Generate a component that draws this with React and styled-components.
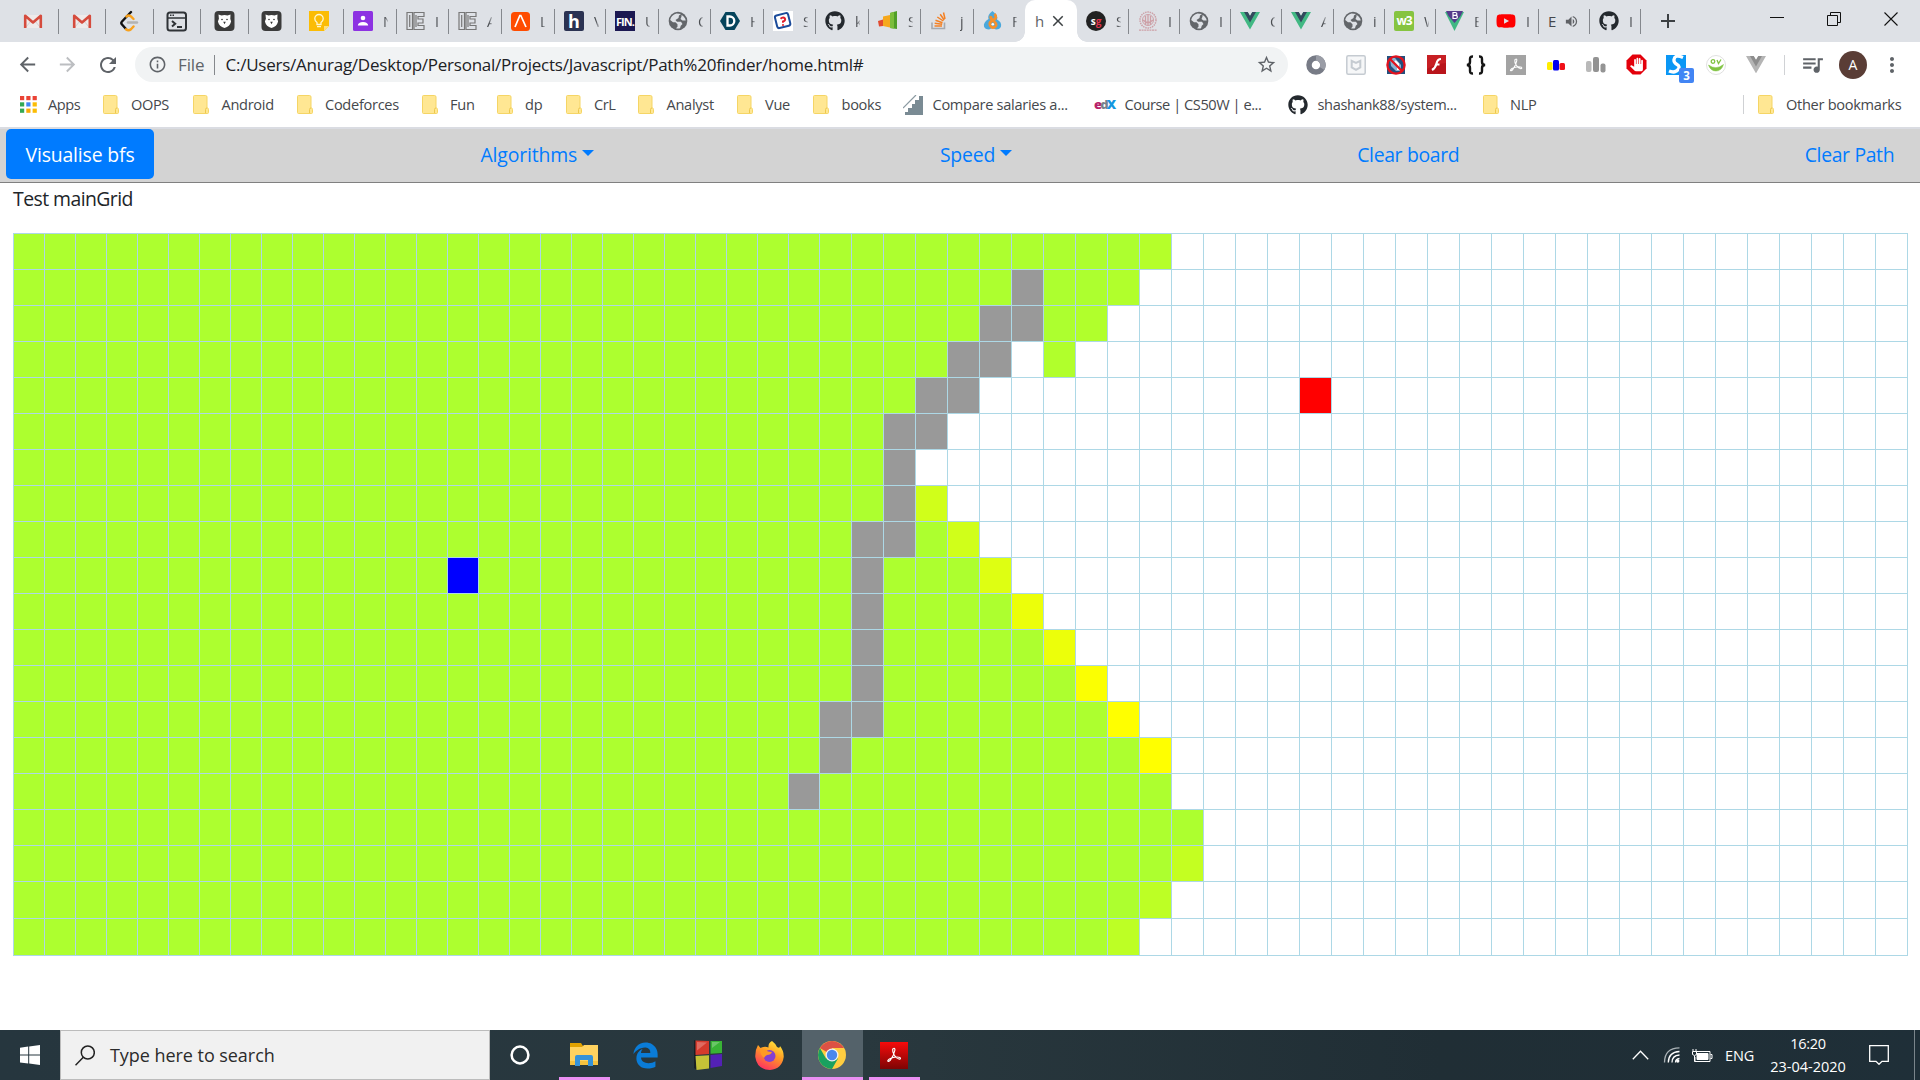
import React from "react";
import styled, { createGlobalStyle } from "styled-components";
import { FaGithub, FaYoutube } from "react-icons/fa";
import { FaEdgeLegacy } from "react-icons/fa6";
import {
  MdPublic, MdArrowBack, MdArrowForward, MdRefresh, MdInfoOutline, MdStarBorder,
  MdQueueMusic, MdVolumeUp, MdClose, MdAdd, MdMoreVert, MdPanTool,
} from "react-icons/md";

const Global = createGlobalStyle`
  *, *::before, *::after { box-sizing: border-box; }
  body {
    margin: 0;
    background: #fff;
    font-family: "Open Sans", "Noto Sans", sans-serif;
    overflow: hidden;
  }
  svg { display: block; flex: none; }
`;

const Screen = styled.div`
  display: flex;
  flex-direction: column;
  width: 1920px;
  height: 1080px;
  overflow: hidden;
`;

const Label = styled.span`
  white-space: pre;
  letter-spacing: ${(p) => p.$ls || 0}px;
`;

/* ---------- tab strip ---------- */

const TabStrip = styled.div`
  display: flex;
  height: 42px;
  background: #dee1e6;
`;

const Tab = styled.div`
  display: flex;
  align-items: center;
  flex: none;
  width: ${(p) => p.$w}px;
  padding-left: ${(p) => (p.$wide ? 9 : 0)}px;
  padding-right: ${(p) => (p.$wide ? 0 : 2)}px;
  justify-content: ${(p) => (p.$wide ? "flex-start" : "center")};
  background: linear-gradient(#85888d, #85888d) right 9px / 1px 25px no-repeat;
  ${(p) => p.$plain && "background: none;"}
`;

const TabTitle = styled.span`
  width: 5px;
  margin-left: 10px;
  white-space: nowrap;
  font-size: 14.5px;
  color: #4a4d51;
  mask-image: linear-gradient(90deg, #000 40%, rgba(0, 0, 0, 0.2));
`;

const ActiveTab = styled.div`
  position: relative;
  display: flex;
  align-items: center;
  gap: 5px;
  width: 52px;
  padding-left: 10px;
  background: #fff;
  border-radius: 10px 10px 0 0;
  font-size: 15px;
  color: #606266;
  &::before, &::after {
    content: "";
    position: absolute;
    bottom: 0;
    width: 10px;
    height: 10px;
  }
  &::before { left: -10px; background: radial-gradient(circle at 0 0, transparent 9.5px, #fff 10px); }
  &::after { right: -10px; background: radial-gradient(circle at 100% 0, transparent 9.5px, #fff 10px); }
`;

const NewTab = styled.div`
  display: flex;
  align-items: center;
  padding-left: 15px;
  color: #3c4043;
`;

const WindowControls = styled.div`
  display: flex;
  gap: 43px;
  margin: 12px 22px 0 auto;
`;

const Tile = styled.span`
  display: flex;
  align-items: center;
  justify-content: center;
  flex: none;
  width: 20px;
  height: 20px;
  border-radius: ${(p) => p.$r ?? 2}px;
  background: ${(p) => p.$bg};
  color: ${(p) => p.$c || "#fff"};
  font-size: ${(p) => p.$fs || 14}px;
  font-weight: 700;
  line-height: 1;
  letter-spacing: ${(p) => p.$ls || 0}px;
`;

const RedLetter = styled.span`
  color: #e0334c;
`;

const Gmail = () => (
  <svg width="20" height="20" viewBox="0 0 20 20">
    <rect x="2" y="4" width="16" height="13" fill="#eeeaea" />
    <path d="M2 4l8 7 8-7M3 16l5-6M17 16l-5-6" stroke="#d5d0d0" fill="none" />
    <path d="M2.200 17V4.800L10 11.500l7.800-6.700V17" fill="none" stroke="#d54b3d" strokeWidth="2.600" strokeLinejoin="round" />
  </svg>
);
const Leet = () => (
  <svg width="20" height="22" viewBox="0 0 20 22" fill="none" strokeLinecap="round" strokeWidth="2.400">
    <path d="M12 2L3 11.500q-1.400 1.500 0 3l4 4.500" stroke="#111" />
    <path d="M7 19.200q2.500 2 5 0l2.500-2.700M14.500 9L12 6.500q-2.300-1.800-4.500 0" stroke="#f9a11b" />
    <path d="M9 12.500h9" stroke="#b3b3b3" />
  </svg>
);
const Terminal = () => (
  <svg width="22" height="21" viewBox="0 0 22 21" fill="none" stroke="#2f3337" strokeWidth="2">
    <rect x="1.500" y="1.500" width="18.500" height="18" rx="2.500" />
    <path d="M1.500 7h19" strokeWidth="1.500" />
    <path d="M4 4.300h5" strokeWidth="1.500" strokeDasharray="1.500 1" />
    <path d="M6 10l3.200 2.700L6 15.500M11 16h5" />
  </svg>
);
const Bear = () => (
  <svg width="21" height="20" viewBox="0 0 21 20">
    <rect x=".5" width="20" height="20" rx="4" fill="#3b3b3b" />
    <path d="M4.500 3.500l3 1q3-1 6 0l3-1-.2 4.300.8 2.700q-1.200 5-6.600 6.500-5.400-1.500-6.600-6.500L4.900 7.800z" fill="#fff" />
    <circle cx="8" cy="8.500" r=".8" fill="#333" /><circle cx="13" cy="8.500" r=".8" fill="#333" />
    <path d="M9.200 10.800h2.600l-1.300 2.400z" fill="#333" />
  </svg>
);
const Keep = () => (
  <svg width="20" height="20" viewBox="0 0 20 20">
    <path d="M0 0h20v15l-5 5H0z" fill="#fbbc05" /><path d="M15 20v-5h5z" fill="#ffdf7a" />
    <path d="M8 13.500v-2Q5.800 10 5.800 7.700a4.200 4.200 0 018.400 0q0 2.300-2.200 3.800v2zM8 15.700h4" fill="none" stroke="#fff6d0" strokeWidth="1.300" />
  </svg>
);
const Classroom = () => (
  <svg width="20" height="20" viewBox="0 0 20 20">
    <rect width="20" height="20" rx="1.500" fill="#8d32e2" />
    <circle cx="10" cy="7" r="2.300" fill="#fff" /><path d="M4.800 14.500q.4-3.500 5.200-3.500t5.200 3.500z" fill="#fff" />
  </svg>
);
const IEIcon = () => (
  <svg width="19" height="20" viewBox="0 0 19 20" fill="none" stroke="#777" strokeWidth="1.200">
    <path d="M1 1.500h5.500v17H1zM3.700 4v12M8 1.500h10v4h-6v2.500h5v4h-5v2.500h6v4H8zM10 4v12" />
  </svg>
);
const Lambda = () => (
  <svg width="19" height="19" viewBox="0 0 19 19">
    <rect width="19" height="19" rx="3.500" fill="#ff4c00" />
    <path d="M4 15L8.800 3.500h1L15 15" fill="none" stroke="#fff" strokeWidth="1.700" />
  </svg>
);
const Globe = () => (
  <svg width="20" height="20" viewBox="0 0 20 20">
    <circle cx="10" cy="10" r="9.300" fill="#63666a" />
    <path d="M8.500 2.500Q3 4 2.200 9l2.800 2.300h2.500l2 2v2.500l-1.500 1.500q2 .6 4 0 .3-2.800 2.500-4.300l-1.500-2.300H9L7.500 9l3-2 .5-2.500 2-1.500zM13.500 5.500l-1 2.500 2 1.500h3.200q-.5-3.500-4.200-5.500z" fill="#dee1e6" />
  </svg>
);
const Disqus = () => (
  <svg width="20" height="20" viewBox="0 0 20 20">
    <path d="M5.500 1h9L20 10l-5.500 9h-9L0 10z" fill="#05445c" />
    <path d="M7.500 5.500h2.300a4.500 4.500 0 010 9H7.500z" fill="none" stroke="#fff" strokeWidth="2.300" />
  </svg>
);
const Quiz = () => (
  <Tile $bg="#fff" $r={0}>
    <svg width="20" height="20" viewBox="0 0 20 20">
      <rect x="3" y="3" width="13.500" height="13" rx="2" transform="rotate(-14 10 10)" fill="#fff" stroke="#1b4b9b" strokeWidth="2" />
      <path d="M7.500 7.800q2.600-2.300 4.400-.3 1 2-1.900 3v1.200M10 13.300v1.500" fill="none" stroke="#df1f2d" strokeWidth="2" />
    </svg>
  </Tile>
);
const Git = () => <FaGithub size={20} color="#24292e" />;
const Bars = () => (
  <svg width="20" height="20" viewBox="0 0 20 20">
    <path d="M0 10l5-1.500v6.500l-4 .5z" fill="#e24a2f" /><path d="M5 5.500L12 4v12.500L5 15z" fill="#f6a81c" />
    <path d="M12 2l7-2v18l-7-1z" fill="#4f9e27" /><path d="M12 2l4-1v16.500l-4-.5z" fill="#7bbd3a" />
  </svg>
);
const Stack = () => (
  <svg width="20" height="18" viewBox="-3 0 20 18" fill="none">
    <path d="M-1 10.500V16.500h12.500v-6" stroke="#a6a9ae" strokeWidth="1.600" />
    <path d="M1.500 14h7.500M1.700 11.300l7.500.9M2.500 8.200l7 2.500M4.300 5l6 4M7.200 2.200l4 5.800M10.500.5l1.500 6.500" stroke="#f48024" strokeWidth="1.500" />
  </svg>
);
const Flame = () => (
  <svg width="19" height="20" viewBox="0 0 19 20">
    <path d="M9.500 0q6 5 4.500 8.500Q19 11 18 15.500 17 18.500 13 18.500L9.500 17 6 18.500Q2 18.500 1 15.500q-1-4 4.500-7.500Q4 4 9.500 0z" fill="#4ba8db" />
    <path d="M11.500 3q3.500 3.500-1.500 6.200Q6 11 7 14q1.500 3.500 5 2 3-2.500-1.500-6Q7 8 8 5" fill="none" stroke="#f5902c" strokeWidth="2.800" />
    <circle cx="9.800" cy="13.300" r="1.300" fill="#fff" />
  </svg>
);
const Seal = () => (
  <svg width="20" height="20" viewBox="0 0 20 20" fill="none" stroke="#cda0a7">
    <circle cx="10" cy="9" r="8" strokeWidth="1.500" strokeDasharray="1.500 .8" />
    <circle cx="10" cy="9" r="5.500" /><path d="M7.500 5v9M10 4v10M12.500 5v9M5 9q5 5 10 0" strokeWidth="1.300" />
    <path d="M1 19.200h18" strokeWidth="1.300" strokeDasharray="2 .6" />
  </svg>
);
const Vue = ({ a = "#41b883", b = "#34495e", w = 20 }) => (
  <svg width={w} height={w * 0.87} viewBox="0 0 20 17.400">
    <path d="M0 0h7.700L10 4l2.300-4H20L10 17.400z" fill={a} /><path d="M4 0h3.700L10 4l2.300-4H16l-6 10.400z" fill={b} />
  </svg>
);
const BootVue = () => (
  <svg width="19" height="20" viewBox="0 0 19 20">
    <path d="M0 1h4l5.500 10L15 1h4L9.500 20z" fill="#41b883" /><path d="M1 0h17l-2.500 5-6 7-6-7z" fill="#553c8b" />
    <path d="M8 1.500h2.300q1.600.1 1.600 1.400t-1.600 1.400H8zM8 4.300h2.700q1.700.1 1.700 1.600t-1.700 1.600H8z" fill="none" stroke="#fff" strokeWidth="1.200" />
  </svg>
);
const Youtube = () => <FaYoutube size={20} color="#f00" />;

const tabs = [
  [59, Gmail], [47, Gmail], [48, Leet], [47, Terminal], [48, Bear], [47, Bear], [48, Keep],
  [53, Classroom, "N"], [52, IEIcon, "I"], [53, IEIcon, "A"], [53, Lambda, "L"],
  [51, () => <Tile $bg="#2b3252" $fs={18}>h</Tile>, "V"],
  [53, () => <Tile $bg="#1c1852" $fs={11} $r={0} $ls={-0.9}>FIN.</Tile>, "U"],
  [52, Globe, "C"], [53, Disqus, "H"], [52, Quiz, "S"], [53, Git, "k"], [52, Bars, "S"],
  [53, Stack, "j"], [51, Flame, "F", true],
];
const tabsAfter = [
  [52, () => <Tile $bg="#222" $r={10} $fs={10}><span>s</span><RedLetter>g</RedLetter></Tile>, "S"],
  [51, Seal, "I"], [51, Globe, "I"], [51, Vue, "C"], [52, Vue, "A"], [51, Globe, "i"],
  [51, () => <Tile $bg="#86c440" $fs={12} $ls={-1}>w3</Tile>, "W"],
  [51, BootVue, "E"], [52, Youtube, "I"],
];

function renderTab([w, Icon, title, plain], i) {
  return (
    <Tab key={i} $w={w} $wide={!!title} $plain={plain}>
      <Icon />
      {title && <TabTitle>{title}</TabTitle>}
    </Tab>
  );
}

const FirstTabs = styled.div`
  display: flex;
  & > :first-child { padding-left: 9px; }
`;

const SoundTab = styled(Tab)`
  gap: 8px;
  font-size: 15px;
  color: #45484d;
`;

/* ---------- toolbar ---------- */

const Toolbar = styled.div`
  display: flex;
  align-items: center;
  height: 45px;
  padding-left: 16px;
  color: #5f6368;
`;

const NavButtons = styled.div`
  display: flex;
  align-items: center;
  gap: 17px;
  width: 119px;
`;

const AddressBar = styled.div`
  display: flex;
  align-items: center;
  width: 1153px;
  height: 35px;
  padding: 0 11px 0 13px;
  border-radius: 18px;
  background: #f1f3f4;
  font-size: 17px;
`;

const Scheme = styled.span`
  display: flex;
  margin: 0 11px 0 11px;
  padding-right: 9px;
  border-right: 1px solid #85888c;
  line-height: 20px;
  color: #606469;
`;

const Url = styled.span`
  flex: 1;
  white-space: nowrap;
  color: #202124;
  letter-spacing: -0.24px;
`;

const Extensions = styled.div`
  display: flex;
  margin-left: 8px;
`;

const Extension = styled.div`
  position: relative;
  display: flex;
  justify-content: center;
  align-items: center;
  width: 40px;
  height: 28px;
`;

const Badge = styled.span`
  position: absolute;
  left: 23px;
  top: 17px;
  width: 15px;
  height: 15px;
  border-radius: 2px;
  background: #4285f4;
  color: #fff;
  font: 700 11.500px/15px "Open Sans", sans-serif;
  text-align: center;
`;

const ToolbarEnd = styled.div`
  display: flex;
  align-items: center;
  margin-left: 8px;
  padding-left: 16px;
  background: linear-gradient(#d0d2d5, #d0d2d5) 0 50% / 1px 20px no-repeat;
`;

const Avatar = styled.span`
  width: 28px;
  height: 28px;
  margin: 0 13px 0 14px;
  border-radius: 50%;
  background: #5a3d36;
  color: #fff;
  font-size: 14px;
  line-height: 28px;
  text-align: center;
`;

const PdfMark = ({ s = 20, stroke = "#fff" }) => (
  <svg width={s} height={s} viewBox="0 0 20 20" fill="none" stroke={stroke} strokeWidth="1.200">
    <path d="M9.500 3.500q1.800-.5 1.300 2Q10 10 6.500 15q-2.500 2.500-2.700.7.500-1.800 4.500-3 5-1.300 7.700-.2 1.200 1.500-.7 1.700-3-.6-5-4T8.700 4.700q0-1 .8-1.200z" />
  </svg>
);

const extensionIcons = [
  <svg width="20" height="20" viewBox="0 0 20 20" key="ring">
    <circle cx="10" cy="10" r="7" fill="none" stroke="#777b86" strokeWidth="5.500" />
    <path d="M10 3a7 7 0 016 10.500" fill="none" stroke="#9a9da6" strokeWidth="5.500" />
  </svg>,
  <svg width="20" height="20" viewBox="0 0 20 20" key="shield" fill="none" stroke="#c5cbd1" strokeWidth="1.500">
    <rect x=".8" y=".8" width="18.400" height="18.400" rx="1.500" fill="#f6f7f8" />
    <path d="M5.700 5.800l4.300 2 4.300-2v6.500L10 14.800l-4.300-2.500z" strokeWidth="2" />
  </svg>,
  <svg width="20" height="20" viewBox="0 0 20 20" key="block">
    <rect x="1" y="1" width="18" height="18" fill="#23507e" /><path d="M4 3h5l6 7v6h-5l-5-5z" fill="#8cb3d2" />
    <path d="M9 6l3 3v6" stroke="#fff" strokeWidth="2" fill="none" />
    <circle cx="10" cy="10" r="8.600" fill="none" stroke="#e3121d" strokeWidth="2.300" />
    <path d="M4 4l12 12" stroke="#e3121d" strokeWidth="2.300" />
  </svg>,
  <svg width="19" height="19" viewBox="0 0 19 19" key="flash">
    <rect width="19" height="19" fill="#b9141b" /><path d="M0 0h19v8Q8 9 0 14z" fill="#d0262b" opacity=".6" />
    <path d="M14 4q-3.500 0-4.500 4.500T5 15M8.500 9.500h4" fill="none" stroke="#fff" strokeWidth="2.200" />
  </svg>,
  <svg width="20" height="20" viewBox="0 0 20 20" key="braces" fill="none" stroke="#151515" strokeWidth="2.400">
    <path d="M7 1.500Q4 1.300 4 4v3q0 3-3.200 3Q4 10 4 13v3q0 2.700 3 2.500M13 1.500q3-.2 3 2.500v3q0 3 3.200 3Q16 10 16 13v3q0 2.700-3 2.500" />
  </svg>,
  <Tile $bg="#a3a3a3" $r={0} key="pdf"><PdfMark s={18} /></Tile>,
  <svg width="18" height="12" viewBox="0 0 18 12" key="rgb">
    <rect y="3" width="5.500" height="8" rx="1.500" fill="#ffed00" /><rect x="6" y="1" width="6" height="10.500" rx="1.500" fill="#0000f0" />
    <rect x="12.500" y="4" width="5.500" height="7" rx="1.500" fill="#f01018" />
  </svg>,
  <svg width="20" height="16" viewBox="0 0 20 16" key="gray">
    <rect y="4" width="5.500" height="11" rx="2" fill="#b9b9b9" /><rect x="7" width="6" height="15" rx="2" fill="#939393" />
    <rect x="14.500" y="6.500" width="5" height="9" rx="2" fill="#949494" />
  </svg>,
  <svg width="21" height="21" viewBox="0 0 21 21" key="adblock">
    <path d="M6.500.5h8l6 6v8l-6 6h-8l-6-6v-8z" fill="#e3000b" />
    <svg x="3.500" y="3.500" width="14" height="14" viewBox="0 0 24 24"><MdPanTool size={24} color="#fff" /></svg>
  </svg>,
  <React.Fragment key="s">
    <svg width="20" height="20" viewBox="0 0 20 20">
      <rect width="20" height="20" fill="#0a97f5" />
      <path d="M17 2.500Q9-1 8 4.500q-.5 3 3 5t1 5q-3 4-9 1.500" fill="none" stroke="#fff" strokeWidth="3.300" />
    </svg>
    <Badge>3</Badge>
  </React.Fragment>,
  <svg width="20" height="20" viewBox="0 0 20 20" key="smile" fill="none" stroke="#80c342" strokeWidth="1.300">
    <circle cx="10" cy="10" r="9.500" fill="#fff" stroke="#d8d8d8" strokeWidth=".8" />
    <circle cx="7" cy="6.500" r="1.800" /><path d="M11 5l1.500 3.500L15 4.500" />
    <path d="M2.500 10Q10 15.500 17.500 9.500q-2 6.500-7.500 6.500T2.500 10z" fill="#80c342" strokeWidth=".5" />
  </svg>,
  <Vue a="#b5b5b5" b="#8d8d8d" key="vue" />,
];

/* ---------- bookmarks ---------- */

const BookmarkBar = styled.div`
  display: flex;
  align-items: center;
  height: 40px;
  padding: 0 0 5px 20px;
  font-size: 14.6px;
  color: #45484c;
`;

const Bookmark = styled.div`
  display: flex;
  align-items: center;
  flex: none;
  gap: ${(p) => p.$gap}px;
  width: ${(p) => p.$w}px;
  line-height: 18px;
  & > span { margin-top: -1px; }
`;

const OtherBookmarks = styled(Bookmark)`
  margin-left: auto;
  padding-left: 14px;
  border-left: 1px solid #cfd1d4;
`;

const Folder = () => (
  <svg width="16" height="19" viewBox="0 0 16 19">
    <path d="M1.500.5h11a1.500 1.500 0 011.500 1.500v11h.5q1 .2 1 1.500v3q0 1-1 1h-13q-1 0-1-1V1.500q0-1 1-1z" fill="#ffe793" stroke="#f5d565" />
    <path d="M12.500 18v-3.500q0-1.500 1.500-1.500" fill="none" stroke="#edc84e" />
  </svg>
);
const appColors = ["#ea4335", "#ea4335", "#ea4335", "#34a853", "#4285f4", "#fbbc05", "#34a853", "#fbaa05", "#fbbc05"];
const AppsIcon = () => (
  <svg width="17" height="17" viewBox="0 0 17 17">
    {appColors.map((c, i) => (
      <rect key={i} x={(i % 3) * 6.3} y={Math.floor(i / 3) * 6.3} width="4.200" height="4.200" fill={c} />
    ))}
  </svg>
);
const Stairs = () => (
  <svg width="20" height="20" viewBox="0 0 20 20">
    <path d="M2 20v-3h3v-4h4V9h3V5h4V1h4v19z" fill="#7a8b94" /><path d="M0 13L13 0" stroke="#8b9aa2" strokeWidth="1.200" />
  </svg>
);
const EdxMark = styled.span`
  width: 20px;
  font-size: 13px;
  font-weight: 800;
  letter-spacing: -1.800px;
  color: ${(p) => p.$c || "#b7216a"};
`;
const Edx = () => <EdxMark>e<EdxMark $c="#77828c">d</EdxMark><EdxMark $c="#1397e0">X</EdxMark></EdxMark>;

const bookmarks = [
  [83, AppsIcon, "Apps", 11, -0.45], [90, Folder, "OOPS", 12, -0.4], [104, Folder, "Android", 12.5, -0.3],
  [125, Folder, "Codeforces", 12, -0.3], [75, Folder, "Fun", 12, -0.2], [69, Folder, "dp", 12, -0.3],
  [72, Folder, "CrL", 12, -0.4], [99, Folder, "Analyst", 12.5, -0.3], [76, Folder, "Vue", 12, -0.3],
  [90, Folder, "books", 12.5, -0.3], [191, Stairs, "Compare salaries a...", 9.5, -0.3],
  [194, Edx, "Course | CS50W | e...", 10.5, -0.45], [195, Git, "shashank88/system...", 9.5, -0.35],
  [80, Folder, "NLP", 11, -0.35],
];

/* ---------- page ---------- */

const Navbar = styled.nav`
  display: flex;
  justify-content: space-between;
  align-items: flex-start;
  height: 56px;
  padding: 0 6px;
  border-top: 2px solid #dadce2;
  border-bottom: 1px solid #808080;
  background: #d3d3d3;
`;

const NavItem = styled.button`
  display: flex;
  align-items: center;
  justify-content: center;
  gap: 5px;
  width: ${(p) => p.$w}px;
  height: 50px;
  padding: 2px 0 0;
  border: 0;
  border-radius: 5px;
  background: ${(p) => (p.$primary ? "#007bff" : "transparent")};
  color: ${(p) => (p.$primary ? "#fff" : "#007bff")};
  font: 400 19.400px/30px "Open Sans", "Noto Sans", sans-serif;
`;

const Caret = styled.span`
  border: 6px solid transparent;
  border-top-color: #007bff;
  border-bottom: 0;
  margin-bottom: 4px;
`;

const Main = styled.main`
  display: flex;
  flex-direction: column;
  flex: 1;
  padding: 0 0 0 13px;
`;

const Heading = styled.p`
  height: 50px;
  margin: 0;
  font-size: 19.4px;
  line-height: 31px;
  color: #212529;
`;

const Grid = styled.div`
  display: grid;
  grid-template-columns: repeat(26, 31px) repeat(34, 32px);
  grid-template-rows: repeat(18, 36px) repeat(2, 37px);
  width: 1895px;
  border-right: 1px solid #add8e6;
  border-bottom: 1px solid #add8e6;
`;

const Cell = styled.div`
  border-left: 1px solid #add8e6;
  border-top: 1px solid #add8e6;
  background: ${(p) => p.$c};
`;

const GREEN = "#adff2f";
const rows = [
  { end: 37, tint: { 36: "#b5ff2a" } },
  { end: 36, wall: [32], tint: { 35: "#b1ff2c" } },
  { end: 35, wall: [31, 32], tint: { 34: "#b1ff2c" } },
  { end: 34, wall: [30, 31], open: [32], tint: { 33: "#b1ff2c" } },
  { end: 31, wall: [29, 30] },
  { end: 30, wall: [28, 29] },
  { end: 29, wall: [28] },
  { end: 30, wall: [28], tint: { 29: "#d0ff1a" } },
  { end: 31, wall: [27, 28], tint: { 30: "#d0ff1a" } },
  { end: 32, wall: [27], tint: { 31: "#deff12", 14: "#00f" } },
  { end: 33, wall: [27], tint: { 32: "#ecff0a" } },
  { end: 34, wall: [27], tint: { 33: "#ecff0a" } },
  { end: 35, wall: [27], tint: { 34: "#fbff02" } },
  { end: 36, wall: [26, 27], tint: { 35: "#ff0" } },
  { end: 37, wall: [26], tint: { 36: "#ff0" } },
  { end: 37, wall: [25] },
  { end: 38 },
  { end: 38, tint: { 37: "#c4ff21" } },
  { end: 37, tint: { 36: "#bdff25" } },
  { end: 36, tint: { 35: "#bdff25" } },
];

function cellColor(r, c) {
  const { end, wall = [], open = [], tint = {} } = rows[r];
  if (r === 4 && c === 41) return "#f00";
  if (tint[c]) return tint[c];
  if (wall.includes(c)) return "#999";
  return c < end && !open.includes(c) ? GREEN : "#fff";
}

/* ---------- taskbar ---------- */

const Taskbar = styled.footer`
  display: flex;
  flex: none;
  height: 50px;
  background: linear-gradient(90deg, #26363e, #29383e 45%, #202e35 75%, #1f2f38);
  color: #fff;
`;

const TaskButton = styled.div`
  display: flex;
  align-items: center;
  justify-content: center;
  width: ${(p) => p.$w}px;
  margin-right: ${(p) => p.$mr || 0}px;
  background: ${(p) => (p.$active ? "#54626a" : "transparent")};
  border-bottom: ${(p) => (p.$open ? "3px solid #ea8ff2" : "0")};
  padding-top: ${(p) => (p.$open ? 3 : 0)}px;
  padding-right: ${(p) => (p.$open ? 2 : 0)}px;
`;

const SearchBox = styled.div`
  display: flex;
  align-items: center;
  gap: 15px;
  width: 430px;
  padding-left: 14px;
  border: 1px solid #bcbcbc;
  background: #f1f1f1;
  color: #2b2b2b;
  font-size: 18px;
`;

const Tray = styled.div`
  display: flex;
  align-items: center;
  margin-left: auto;
  padding-right: 5px;
  font-size: 14.5px;
`;

const Language = styled.span`
  margin-left: 12px;
  letter-spacing: -0.2px;
`;

const Clock = styled.div`
  display: flex;
  flex-direction: column;
  align-items: center;
  width: 76px;
  margin: 0 23px 0 16px;
  font-size: 14.5px;
  line-height: 23px;
`;

const ShowDesktop = styled.div`
  width: 6px;
  height: 50px;
  margin: 0 -5px 0 25px;
  border-left: 1px solid #7a858b;
`;

const Windows = () => (
  <svg width="20" height="20" viewBox="0 0 20 20" fill="#fff">
    <path d="M0 2.700L8.200 1.600v8H0zM9.200 1.400L20 0v9.600H9.200zM0 10.500h8.200v8L0 17.400zM9.200 10.500H20V20L9.200 18.600z" />
  </svg>
);
const ExplorerIcon = () => (
  <svg width="28" height="24" viewBox="0 0 28 24">
    <path d="M0 0h11l2 3v3H0z" fill="#e0a100" /><path d="M0 4h12l2-2h14v20H0z" fill="#ffd25f" />
    <path d="M0 18h28v4H0z" fill="#f5c13e" />
    <path d="M5 23V14q0-2 2-2h14q2 0 2 2v9h-5v-6h-8v6z" fill="#3592d8" />
  </svg>
);
const Cubes = () => (
  <svg width="28" height="31" viewBox="0 0 28 31">
    <path d="M0 0l2 1v27l1 2-3-2z" fill="#1a2025" />
    <path d="M1.500.5L15 1v13L1.500 15z" fill="#d53a2c" /><path d="M16.500 1H28v12l-11.500.7z" fill="#39b335" />
    <path d="M1.500 16L15 15.200v13.300L2.500 30z" fill="#c5c237" /><path d="M16.500 15L28 14v12l-11.500 2z" fill="#5321b5" />
    <path d="M3 2l10 .4-10 8zM18 2h8l-8 6z" fill="#fff" opacity=".25" />
  </svg>
);
const Firefox = () => (
  <svg width="29" height="29" viewBox="0 0 29 29">
    <defs>
      <linearGradient id="ff" x1=".8" y1="0" x2=".3" y2="1">
        <stop offset="0" stopColor="#ffec3d" /><stop offset=".45" stopColor="#ff9a24" /><stop offset="1" stopColor="#ff2f63" />
      </linearGradient>
    </defs>
    <path d="M17 0q4 3 5 6 3 2 3-1 4 5 3.700 11Q27 28 15 29 2 28.500.3 16 0 9 3 4l2.500 3q4-2 8-.5Q13 2 17 0z" fill="url(#ff)" />
    <circle cx="14.500" cy="15" r="6" fill="#8540d0" />
    <path d="M5 8q5 0 8 2.500l4 .5q-1 3-5 3-2 1-3 3-4-3-4-9z" fill="#ff9a24" />
  </svg>
);
const Chrome = () => (
  <svg width="28" height="28" viewBox="0 0 28 28">
    <circle cx="14" cy="14" r="14" fill="#ffcd40" />
    <path d="M14 14L1.900 7A14 14 0 0126.100 7H14z" fill="#dd5144" />
    <path d="M1.900 7A14 14 0 0014 28l6-10.500-12 0z" fill="#1aa15f" />
    <circle cx="14" cy="14" r="6.500" fill="#f1f1f1" /><circle cx="14" cy="14" r="5.200" fill="#4a87ee" />
  </svg>
);

export default function App() {
  return (
    <Screen>
      <Global />
      <TabStrip>
        <FirstTabs>{tabs.map(renderTab)}</FirstTabs>
        <ActiveTab>h<MdClose size={18} color="#3c4043" /></ActiveTab>
        {tabsAfter.map(renderTab)}
        <SoundTab $w={51} $wide>E<MdVolumeUp size={15} color="#606266" /></SoundTab>
        {renderTab([51, Git, "I"], "last")}
        <NewTab><MdAdd size={24} /></NewTab>
        <WindowControls>
          <svg width="14" height="14" viewBox="0 0 14 14"><path d="M0 5.500h14" stroke="#111" /></svg>
          <svg width="14" height="14" viewBox="0 0 14 14" fill="none" stroke="#111"><path d="M.5 3.500h10v10H.5zM3.500 3V.5h10v10H11" /></svg>
          <svg width="14" height="14" viewBox="0 0 14 14"><path d="M.5.5l13 13M13.500.5l-13 13" stroke="#111" strokeWidth="1.100" /></svg>
        </WindowControls>
      </TabStrip>

      <Toolbar>
        <NavButtons>
          <MdArrowBack size={23} /><MdArrowForward size={23} color="#bcbec1" /><MdRefresh size={24} />
        </NavButtons>
        <AddressBar>
          <MdInfoOutline size={19} />
          <Scheme><Label $ls={-0.1}>File</Label></Scheme>
          <Url>C:/Users/Anurag/Desktop/Personal/Projects/Javascript/Path%20finder/home.html#</Url>
          <MdStarBorder size={21} />
        </AddressBar>
        <Extensions>
          {extensionIcons.map((icon, i) => <Extension key={i}>{icon}</Extension>)}
        </Extensions>
        <ToolbarEnd>
          <MdQueueMusic size={25} />
          <Avatar>A</Avatar>
          <MdMoreVert size={24} />
        </ToolbarEnd>
      </Toolbar>

      <BookmarkBar>
        {bookmarks.map(([w, Icon, text, gap, ls]) => (
          <Bookmark key={text} $w={w} $gap={gap}><Icon /><Label $ls={ls}>{text}</Label></Bookmark>
        ))}
        <OtherBookmarks $w={177} $gap={12}><Folder /><Label $ls={-0.3}>Other bookmarks</Label></OtherBookmarks>
      </BookmarkBar>

      <Navbar>
        <NavItem $primary $w={148}><Label $ls={-0.15}>Visualise bfs</Label></NavItem>
        <NavItem $w={155}><Label $ls={-0.15}>Algorithms</Label><Caret /></NavItem>
        <NavItem $w={111}><Label $ls={-0.2}>Speed</Label><Caret /></NavItem>
        <NavItem $w={142}><Label $ls={-0.35}>Clear board</Label></NavItem>
        <NavItem $w={129}><Label $ls={-0.35}>Clear Path</Label></NavItem>
      </Navbar>

      <Main>
        <Heading><Label $ls={-0.55}>Test mainGrid</Label></Heading>
        <Grid>
          {rows.map((_, r) => Array.from({ length: 60 }, (_, c) => <Cell key={`${r}-${c}`} $c={cellColor(r, c)} />))}
        </Grid>
      </Main>

      <Taskbar>
        <TaskButton $w={60}><Windows /></TaskButton>
        <SearchBox>
          <svg width="20" height="21" viewBox="0 0 20 21" fill="none" stroke="#222" strokeWidth="1.500">
            <circle cx="12.800" cy="7.500" r="6.500" /><path d="M8.300 12.300L.5 20.300" />
          </svg>
          <Label $ls={-0.05}>Type here to search</Label>
        </SearchBox>
        <TaskButton $w={59} $mr={10}>
          <svg width="20" height="20" viewBox="0 0 20 20"><circle cx="10" cy="10" r="8.400" fill="none" stroke="#fff" strokeWidth="2.500" /></svg>
        </TaskButton>
        <TaskButton $w={51} $mr={10} $open><ExplorerIcon /></TaskButton>
        <TaskButton $w={51} $mr={11}><FaEdgeLegacy size={27} color="#0a7cd8" /></TaskButton>
        <TaskButton $w={51} $mr={11}><Cubes /></TaskButton>
        <TaskButton $w={51} $mr={7}><Firefox /></TaskButton>
        <TaskButton $w={61} $mr={6} $open $active><Chrome /></TaskButton>
        <TaskButton $w={51} $open>
          <svg width="28" height="27" viewBox="0 0 28 27">
            <defs><linearGradient id="ac" x2="0" y2="1"><stop stopColor="#f70b0b" /><stop offset="1" stopColor="#7d0404" /></linearGradient></defs>
            <rect width="28" height="27" fill="url(#ac)" />
            <svg x="4" y="3" width="20" height="20"><PdfMark /></svg>
          </svg>
        </TaskButton>
        <Tray>
          <svg width="17" height="10" viewBox="0 0 17 10"><path d="M.8 9.200l7.700-8 7.700 8" fill="none" stroke="#fff" strokeWidth="1.300" /></svg>
          <svg width="32" height="16" viewBox="0 0 32 16" fill="none" stroke="#fff">
            <g transform="translate(14.5 0)" strokeWidth="1.300">
              <path d="M1 15.500Q1 1 16 .8" stroke="#aab2b6" /><path d="M4.800 15.500Q5 5 16 4.500M8.500 15.500Q8.500 8.500 16 8M12 15.500q0-3.500 4-4" />
              <circle cx="14.300" cy="14" r="1" fill="#fff" />
            </g>
          </svg>
          <svg width="32" height="15" viewBox="0 0 32 15" fill="none" stroke="#fff">
            <path d="M15 3.500h14v10H14V9M29.500 6.500h1.500v4h-1.500" /><path d="M16 5.500h11v6H16z" fill="#fff" />
            <path d="M11.500 3.500h4v3q-2 2-4 0zM12 1v2M15 1v2M13.500 8v5.500h2" />
          </svg>
          <Language>ENG</Language>
          <Clock><Label $ls={-0.3}>16:20</Label><Label>23-04-2020</Label></Clock>
          <svg width="20" height="20" viewBox="0 0 20 20" fill="none" stroke="#fff" strokeWidth="1.300"><path d="M.7.7h18.600v15.600h-6.300l-3 3-3-3H.7z" /></svg>
          <ShowDesktop />
        </Tray>
      </Taskbar>
    </Screen>
  );
}
